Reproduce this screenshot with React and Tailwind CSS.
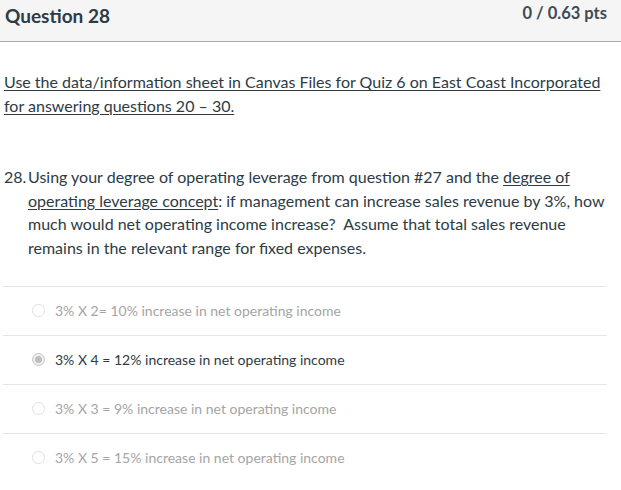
import React from 'react';

const answers = [
  { text: '3% X 2= 10% increase in net operating income', picked: false },
  { text: '3% X 4 = 12% increase in net operating income', picked: true },
  { text: '3% X 3 = 9% increase in net operating income', picked: false },
  { text: '3% X 5 = 15% increase in net operating income', picked: false },
];

const Radio = ({ picked }) => (
  <span
    className={`inline-flex items-center justify-center w-[13px] h-[13px] rounded-full border shrink-0 ${
      picked ? 'border-[#c4c4c4] bg-[#f0f0f0]' : 'border-[#e0e0e0] bg-white'
    }`}
  >
    {picked && <span className="w-[7px] h-[7px] rounded-full bg-[#bdbdbd]" />}
  </span>
);

const App = () => {
  return (
    <div className="w-[621px] h-[490px] bg-white text-[#2d3b45] font-['Lato',sans-serif] overflow-hidden">
      {/* Header */}
      <div className="h-[42px] bg-[#f5f5f5] border-b border-[#aaaaaa] flex justify-between items-start pl-[5px] pr-[14px]">
        <div className="text-[19px] font-bold leading-[22px] pt-[5px]">Question 28</div>
        <div className="text-[16.5px] font-bold leading-[20px] pt-[3px] text-[#3d4a54]">0 / 0.63 pts</div>
      </div>

      <div className="pl-[4px] pr-[14px]">
        <p className="mt-[28px] text-[16px] leading-[23.5px] underline underline-offset-2">
          Use the data/information sheet in Canvas Files for Quiz 6 on East Coast Incorporated for answering questions 20 – 30.
        </p>

        <div className="mt-[48px] flex text-[16px] leading-[23.7px] mr-[-3px]">
          <span className="w-[23px] shrink-0 whitespace-nowrap">28.&nbsp;</span>
          <p className="pl-[1px]">
            Using your degree of operating leverage from question #27 and the{' '}
            <span className="underline underline-offset-2">degree of operating leverage concept</span>: if management can
            increase sales revenue by 3%, how much would net operating income increase?&nbsp; Assume that total sales
            revenue remains in the relevant range for fixed expenses.
          </p>
        </div>

        <div className="mt-[26px] ml-[-1px]">
          {answers.map((a) => (
            <div
              key={a.text}
              className="h-[49px] border-t border-[#e6e6e6] flex items-center pl-[29px] gap-[10px]"
            >
              <Radio picked={a.picked} />
              <span className={`text-[14px] ${a.picked ? 'text-[#2d3b45]' : 'text-[#a5a5a5]'}`}>{a.text}</span>
            </div>
          ))}
        </div>
      </div>
    </div>
  );
};

export default App;
